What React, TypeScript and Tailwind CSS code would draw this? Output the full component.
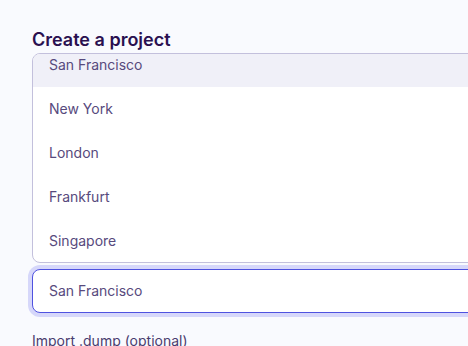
const regions = ["San Francisco", "New York", "London", "Frankfurt", "Singapore"];

export default function App() {
  return (
    <div
      className="w-[468px] h-[346px] overflow-hidden bg-[#f9fafe] pl-8 pt-7"
      style={{ fontFamily: "Inter, 'Noto Sans', sans-serif" }}
    >
      <div className="w-[480px]">
        <h1 className="text-lg leading-6 font-semibold text-[#2a1050]">
          Create a project
        </h1>

        <div className="mt-px h-[210px] overflow-hidden rounded-lg border border-[#c3c0dc] bg-white">
          <ul className="-mt-[11px]">
            {regions.map((r, i) => (
              <li
                key={r}
                className={`flex h-11 items-center px-4 text-sm text-[#574a7d] ${
                  i === 0 ? "bg-[#f0f0f8]" : ""
                }`}
              >
                {r}
              </li>
            ))}
          </ul>
        </div>

        <div className="mt-1.5 flex h-11 items-center rounded-lg border border-[#4f52e0] bg-white px-4 text-sm text-[#574a7d] ring-4 ring-[#d6d7fa]">
          San Francisco
        </div>

        <p className="mt-[18px] text-sm leading-5 text-[#4a3c6e]">
          Import .dump (optional)
        </p>
      </div>
    </div>
  );
}
